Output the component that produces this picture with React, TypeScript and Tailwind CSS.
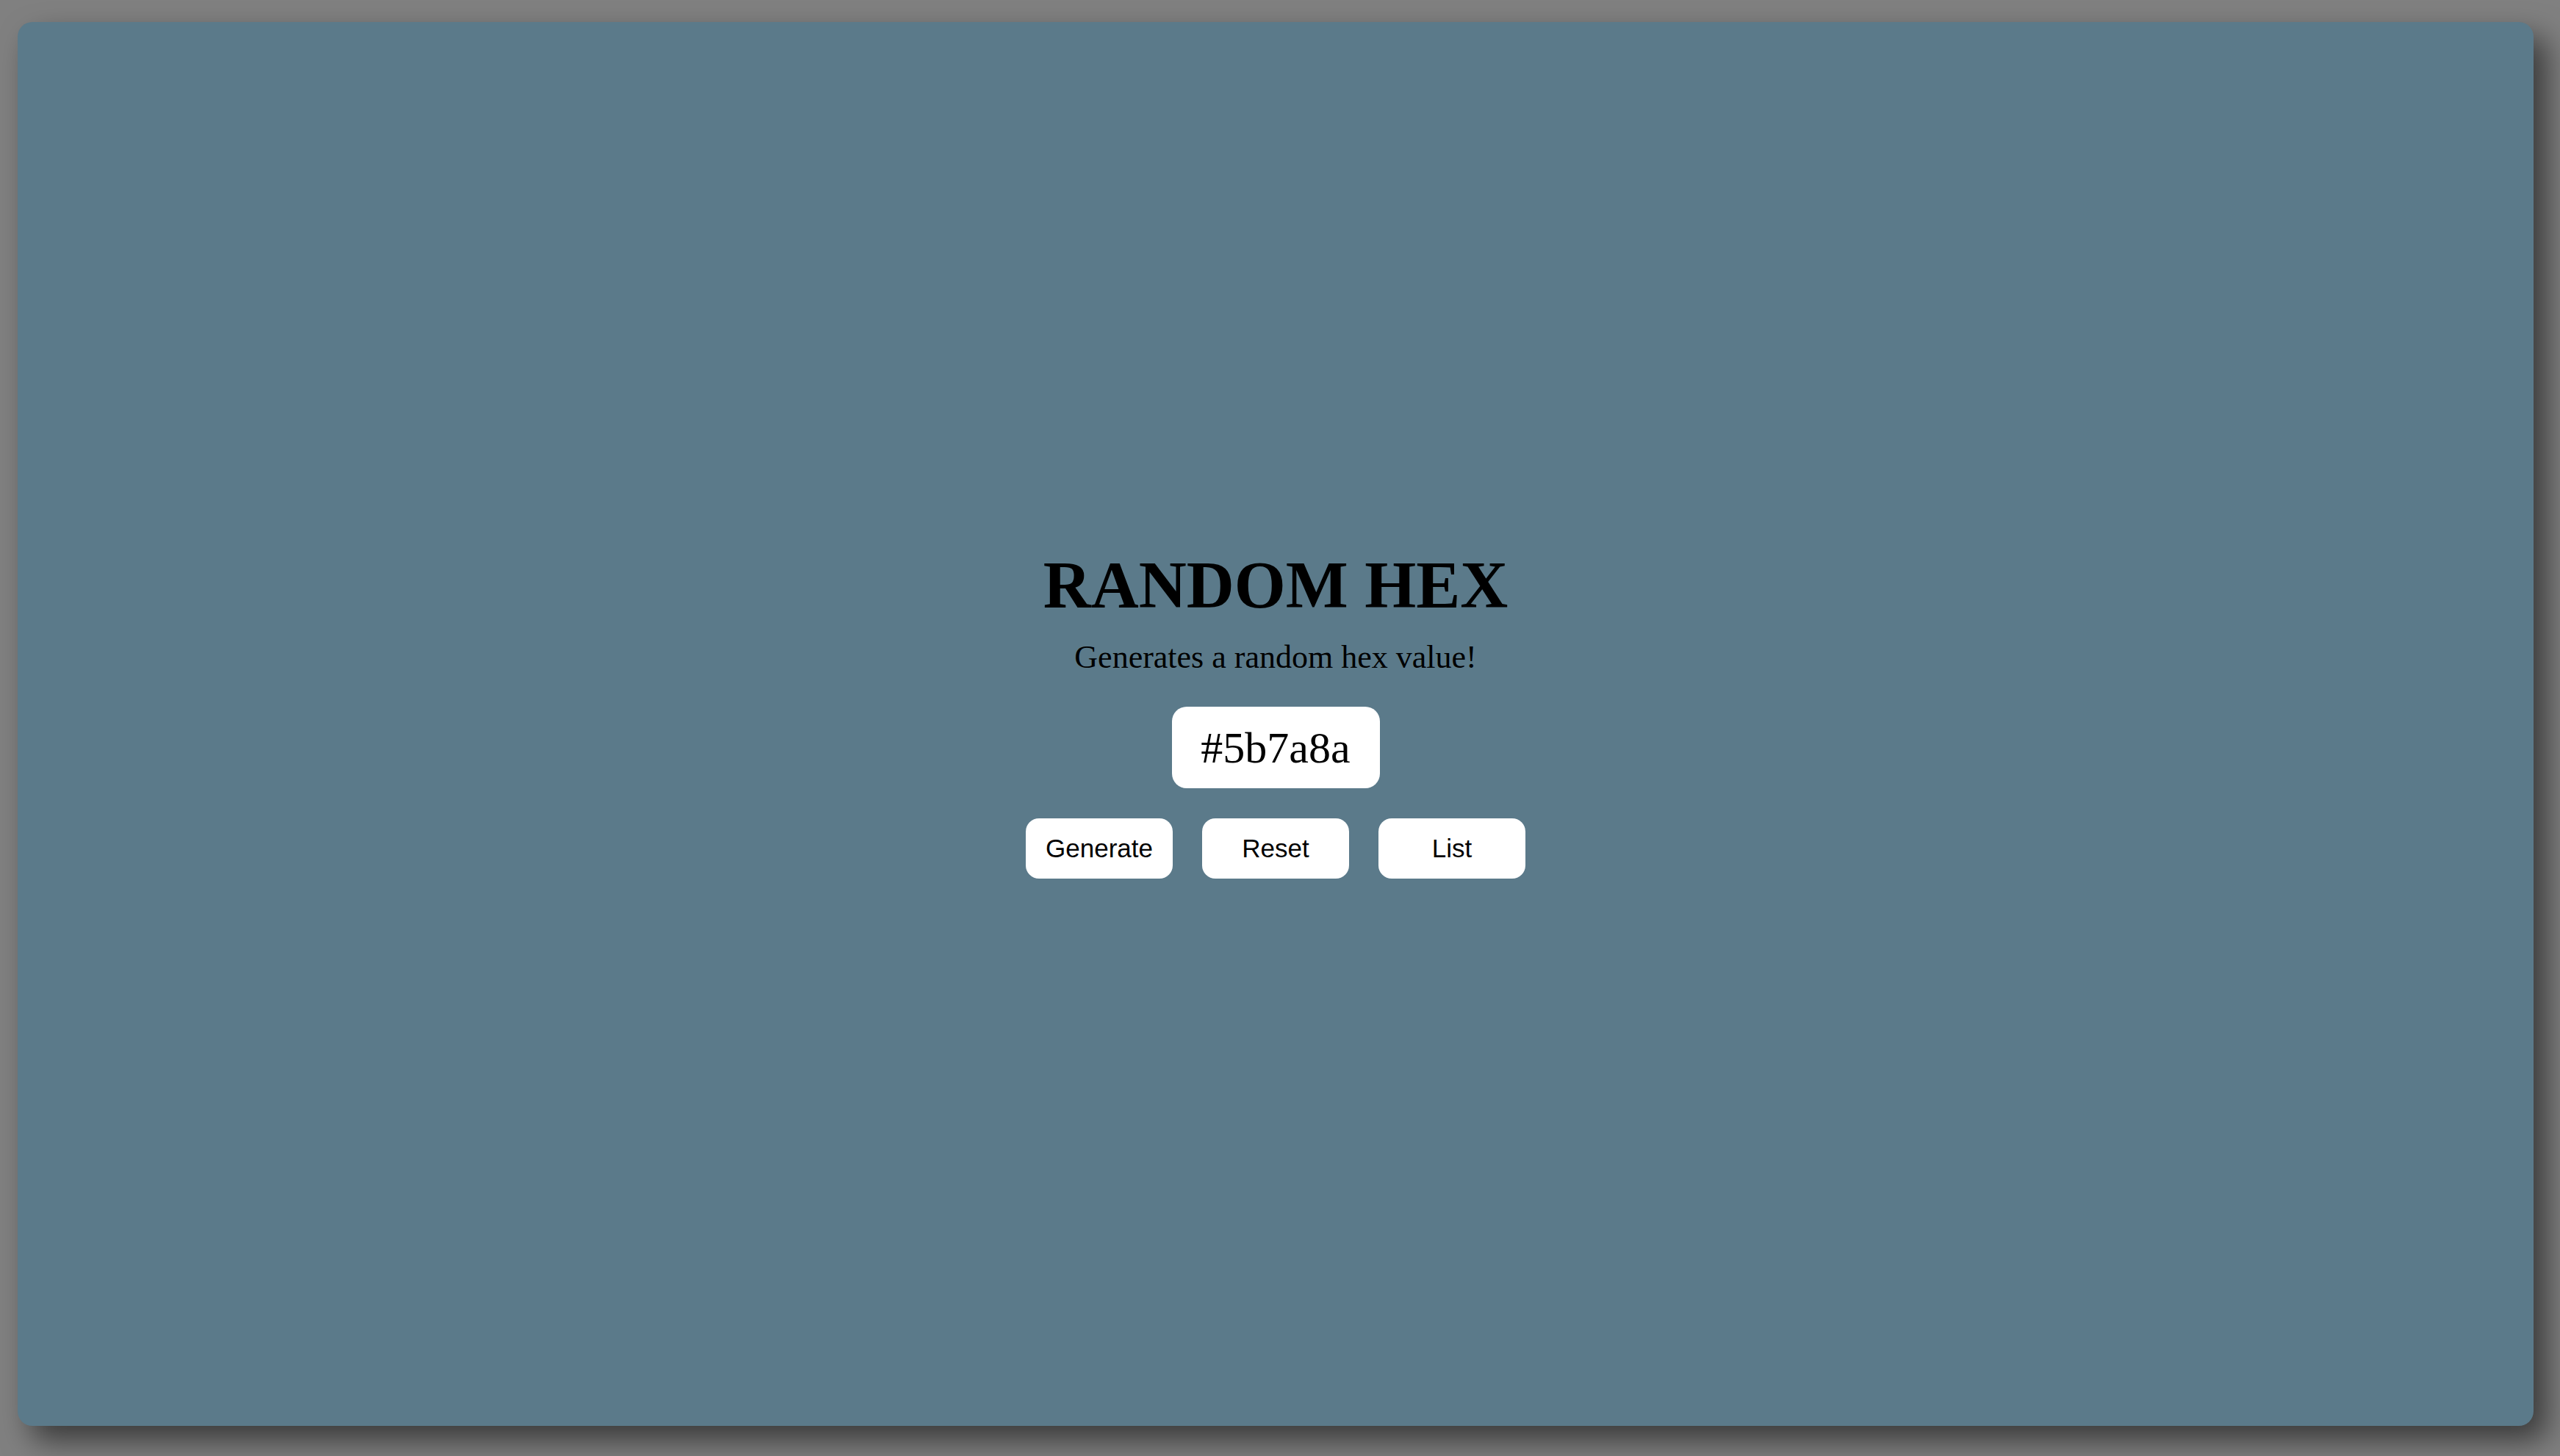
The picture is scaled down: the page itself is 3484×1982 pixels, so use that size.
import React from "react";

export default function App() {
  const buttons = ["Generate", "Reset", "List"];
  return (
    <div className="h-screen w-full bg-[#808080] flex pt-[30px] pl-[24px] pr-[36px] pb-[41px]">
      <div className="flex-1 rounded-[20px] bg-[#5b7a8a] shadow-[18px_20px_40px_rgba(0,0,0,0.55)] flex flex-col items-center justify-center pb-[23px] text-black font-['Liberation_Serif','Times_New_Roman',serif]">
        <h1 className="text-[90px] font-bold leading-none">RANDOM HEX</h1>
        <p className="mt-[31px] text-[44px] leading-none">Generates a random hex value!</p>
        <div className="mt-[45px] w-[283px] h-[111px] rounded-[20px] bg-white flex items-center justify-center text-[60px] leading-none">
          #5b7a8a
        </div>
        <div className="mt-[41px] flex gap-[40px]">
          {buttons.map((b) => (
            <button
              key={b}
              className="w-[200px] h-[82px] rounded-[18px] bg-white flex items-center justify-center pb-[2px] text-[35px] leading-none text-black font-['Liberation_Sans','Arial',sans-serif]"
            >
              {b}
            </button>
          ))}
        </div>
      </div>
    </div>
  );
}
